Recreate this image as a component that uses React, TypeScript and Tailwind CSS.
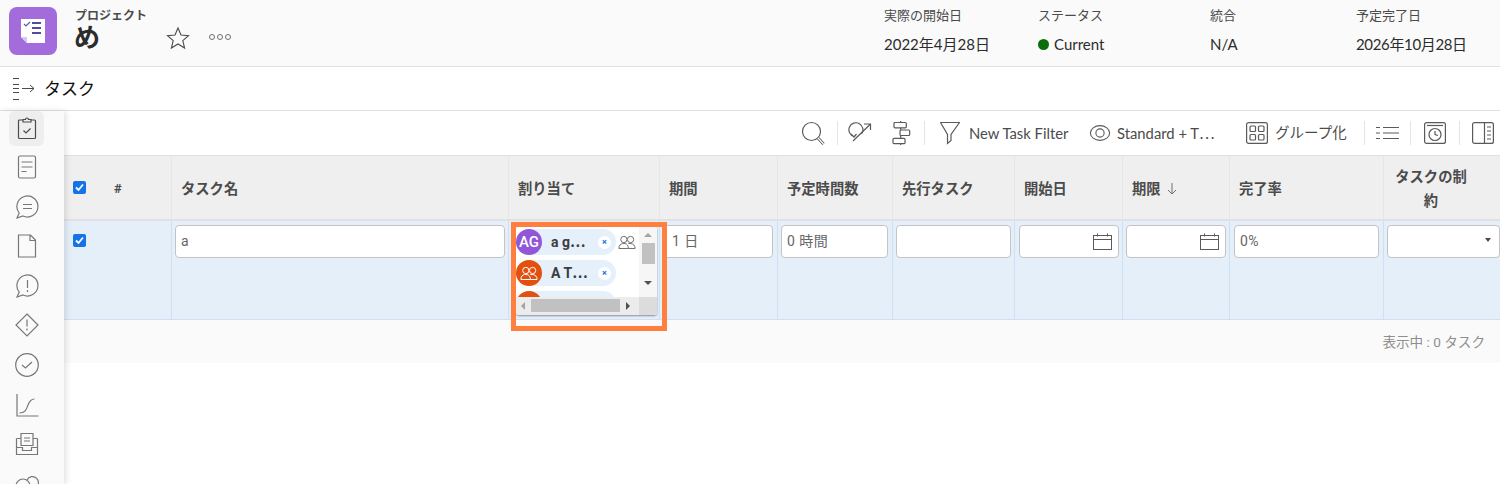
import React from 'react';

const FONT = "font-['Roboto','Noto_Sans_CJK_JP',sans-serif]";
const ADOBE = "font-['Lato','Noto_Sans_CJK_JP',sans-serif]";

const Ico: React.FC<{ w?: number; h?: number; box: string; className?: string; children: React.ReactNode }> = ({ w = 24, h = 24, box, className, children }) => (
  <svg width={w} height={h} viewBox={box} fill="none" stroke="currentColor" strokeWidth="1.2" className={className}>
    {children}
  </svg>
);

const Sep = () => <div className="w-px h-6 bg-[#e4e4e4]" />;

const MetaCol: React.FC<{ label: string; className: string; children: React.ReactNode }> = ({ label, className, children }) => (
  <div className={className}>
    <div className="text-[13px] leading-[18px] text-[#4b4b4b]">{label}</div>
    <div className="mt-[10px] text-[15px] leading-[20px] text-[#2c2c2c] flex items-center">{children}</div>
  </div>
);

const Header = () => (
  <header className={`h-[67px] bg-[#fafafa] border-b border-[#e1e1e1] flex items-start ${ADOBE}`}>
    <div className="ml-[9px] mt-[7px] w-12 h-12 rounded-lg bg-[#a36cdc] flex items-center justify-center">
      <svg width="26" height="26" viewBox="0 0 26 26">
        <path d="M1 1h24v24H7l-6-6z" fill="#fff" />
        <path d="M1 19h6v6z" fill="#d8c4ee" />
        <path d="M4 6l2 2 4-4" fill="none" stroke="#5c5ca8" strokeWidth="1.2" />
        <path d="M12 5h9M12 10h9M12 15h9" stroke="#4f4f9a" strokeWidth="2" />
      </svg>
    </div>
    <div className={`ml-[18px] mt-[9px] w-[92px] ${FONT}`}>
      <div className="text-[12px] leading-[15px] font-bold text-[#4b4b4b]">プロジェクト</div>
      <div className="-ml-px text-[26px] leading-[29px] font-bold text-[#2c2c2c]">め</div>
    </div>
    <svg width="24" height="24" viewBox="0 0 24 24" fill="none" stroke="#4b4b4b" strokeWidth="1.1" className="mt-[26px] -ml-px">
      <path d="M12 2l3 7 7.500 .7-5.700 4.900 1.800 7.400L12 18l-6.600 4 1.800-7.400L1.500 9.700 9 9z" />
    </svg>
    <div className="ml-[19px] mt-[34px] flex gap-[2px]">
      <span className="w-[6px] h-[6px] rounded-full border border-[#6e6e6e]" />
      <span className="w-[6px] h-[6px] rounded-full border border-[#6e6e6e]" />
      <span className="w-[6px] h-[6px] rounded-full border border-[#6e6e6e]" />
    </div>
    <div className="ml-auto flex pt-[6px]">
      <MetaCol label="実際の開始日" className="w-[154px]">2022年4月28日</MetaCol>
      <MetaCol label="ステータス" className="w-[172px]">
        <span className="w-[11px] h-[11px] rounded-full bg-[#0b6e0b] mr-[5px]" />
        Current
      </MetaCol>
      <MetaCol label="統合" className="w-[146px]">N/A</MetaCol>
      <MetaCol label="予定完了日" className="w-[144px]">
        <span className="tracking-[-0.35px]">2026年10月28日</span>
      </MetaCol>
    </div>
  </header>
);

const SubHeader = () => (
  <div className={`h-[44px] bg-white border-b border-[#e1e1e1] flex items-center pl-[13px] ${FONT}`}>
    <svg width="22" height="24" viewBox="0 0 22 24" fill="none" stroke="#4b4b4b" strokeWidth="1">
      <path d="M0 1.500h6M0 7.500h6M0 11.500h6M0 15.500h6M0 22.500h6" />
      <path d="M9 11.500h12M17 8l4 3.500-4 3.500" />
    </svg>
    <span className="ml-[9px] pt-[3px] text-[17px] text-[#111]">タスク</span>
  </div>
);

const Sidebar = () => {
  const c = 'text-[#777]';
  return (
    <aside className="w-16 shrink-0 bg-[#fafafa] shadow-[2px_0_6px_rgba(0,0,0,0.12)] z-10 flex flex-col items-start pl-[9px] overflow-hidden h-[374px]">
      <div className="w-[35px] h-[35px] rounded-md bg-[#eeeeee] flex items-center justify-center pb-[2px] shrink-0">
        <Ico box="0 0 20 24" w={20} h={24} className="text-[#4b4b4b]">
          <path d="M6 4H2.500A1 1 0 0 0 1.500 5v16.500a1 1 0 0 0 1 1h15a1 1 0 0 0 1-1V5a1 1 0 0 0-1-1H14M6 6V3.500h2.500a1.500 1.500 0 0 1 3 0H14V6z" />
          <path d="M6.500 14.500l2.500 2.500 4.500-4.500" />
        </Ico>
      </div>
      <div className={`w-[35px] flex flex-col items-center gap-[15.600px] mt-[9px] ${c}`}>
        <Ico box="0 0 20 24" w={20} h={24}>
          <rect x="1.500" y="1" width="17" height="22" rx="1.500" />
          <path d="M4.500 7h11M4.500 12h11M4.500 16.500h5" />
        </Ico>
        <Ico box="0 0 24 24">
          <path d="M2 23l2.200-5A10.500 10.500 0 1 1 8 21z" />
          <path d="M8 9.500h9M8 13.500h9" />
        </Ico>
        <Ico box="0 0 20 24" w={20} h={24}>
          <path d="M1.500 1h12l5 5v17h-17zM13 1v5.500h5.500" />
        </Ico>
        <Ico box="0 0 24 24">
          <path d="M2 23l2.200-5A10.500 10.500 0 1 1 8 21z" />
          <path d="M12.500 6v8M12.500 16v2" />
        </Ico>
        <Ico box="0 0 24 24">
          <path d="M12 1l11 11-11 11L1 12z" />
          <path d="M12 6.500v7M12 15.500v2" />
        </Ico>
        <Ico box="0 0 24 24">
          <circle cx="12" cy="12" r="11.300" />
          <path d="M7 12l3.500 3L17 9" />
        </Ico>
        <Ico box="0 0 24 24">
          <path d="M2 1v22h21.500" />
          <path d="M4.500 20c6 0 7-4 8.500-8s3-6 6.500-6" />
        </Ico>
        <Ico box="0 0 24 24">
          <path d="M1.500 6.500v16h21v-16M1.500 15.500h6v3h9v-3h6" />
          <path d="M6 6.500V1.500h12v12H6zM9 6h6M9 9h6" />
          <path d="M1.500 6.500H6M18 6.500h4.500" />
        </Ico>
        <Ico box="0 0 24 24">
          <circle cx="8" cy="14" r="7" />
          <path d="M12 8a6 6 0 1 1 8 8M5 13h6M5 16h6" />
        </Ico>
      </div>
    </aside>
  );
};

const ToolText: React.FC<{ children: React.ReactNode; className: string }> = ({ children, className }) => (
  <span className={`text-[#4b4b4b] whitespace-nowrap ${className}`}>{children}</span>
);

const Toolbar = () => (
  <div className={`h-[44px] flex items-center text-[#5a5a5a] pl-[737px] ${ADOBE}`}>
    <Ico box="0 0 24 24" className="shrink-0">
      <circle cx="10.500" cy="10.500" r="9" />
      <path d="M17 17l5.500 6" strokeWidth="3" />
      <path d="M17 17l5.500 6" strokeWidth="1.200" stroke="#fff" />
    </Ico>
    <div className="ml-[12px]"><Sep /></div>
    <Ico box="0 0 24 24" className="ml-[10px] shrink-0">
      <path d="M5 20L22.500 3M16 3h6.500v6" />
      <path d="M6 15.500A7 7 0 1 1 13.500 13M3 13l3 3 2.500-3" />
    </Ico>
    <Ico box="0 0 19 24" w={19} h={24} className="ml-[20px] shrink-0">
      <rect x="2" y="1.500" width="12.300" height="5.300" rx="1" />
      <rect x="8" y="9" width="9.700" height="5.500" rx="1" />
      <rect x="1" y="17.300" width="12" height="5.400" rx="1" />
      <path d="M8.700 0v1.500M8.700 6.800V9M8.700 14.500v2.800M8.700 22.700V24" />
    </Ico>
    <div className="ml-[13px]"><Sep /></div>
    <Ico box="0 0 20 24" w={20} h={24} className="ml-[15px] shrink-0">
      <path d="M.5 1.500h19L11 13.500v6l-3.500 3v-9z" />
    </Ico>
    <ToolText className="ml-[9px] w-[100px] text-[14.800px]">New Task Filter</ToolText>
    <Ico box="0 0 24 24" w={22} h={24} className="ml-[20px] shrink-0">
      <ellipse cx="12" cy="12" rx="10.500" ry="8" />
      <circle cx="12" cy="12" r="4.500" />
    </Ico>
    <ToolText className="ml-[6px] w-[118px] text-[14.800px]">Standard + T⋯</ToolText>
    <Ico box="0 0 22 22" w={22} h={22} className="ml-[11px] shrink-0">
      <rect x=".6" y=".6" width="20.800" height="20.800" rx="2" />
      <rect x="4" y="4" width="5.500" height="5.500" rx="1" />
      <rect x="12.500" y="4" width="5.500" height="5.500" rx="1" />
      <rect x="4" y="12.500" width="5.500" height="5.500" rx="1" />
      <rect x="12.500" y="12.500" width="5.500" height="5.500" rx="1" />
    </Ico>
    <ToolText className="ml-[7px] w-[72px] text-[14.500px]">グループ化</ToolText>
    <div className="ml-[17px]"><Sep /></div>
    <Ico box="0 0 24 24" className="ml-[11px] shrink-0">
      <path d="M0 6.500h4M7 6.500h16M0 12h4M7 12h16M0 17.500h4M7 17.500h16" />
    </Ico>
    <div className="ml-[10px]"><Sep /></div>
    <Ico box="0 0 22 22" w={22} h={22} className="ml-[13px] shrink-0">
      <rect x=".6" y=".6" width="20.800" height="20.800" rx="2" />
      <path d="M3 3.500h16" />
      <circle cx="11" cy="12.500" r="6" />
      <path d="M11 9v3.500l3 1" />
    </Ico>
    <div className="ml-[13px]"><Sep /></div>
    <Ico box="0 0 22 22" w={22} h={22} className="ml-[12px] shrink-0">
      <rect x=".6" y=".6" width="20.800" height="20.800" rx="2" />
      <path d="M12.500 .6v20.800M15 5h4M15 9h4M15 13h4M15 17h4" />
    </Ico>
  </div>
);

const GRID = 'grid grid-cols-[107px_337px_151px_118px_115px_122px_108px_107px_154px_140px]';

const Checkbox = () => (
  <span className="w-[13px] h-[13px] rounded-[2px] bg-[#1473e6] flex items-center justify-center">
    <svg width="9" height="9" viewBox="0 0 9 9" fill="none" stroke="#fff" strokeWidth="1.800">
      <path d="M1 4.500l2.500 2.500L8 1.500" />
    </svg>
  </span>
);

const headCols = ['タスク名', '割り当て', '期間', '予定時間数', '先行タスク', '開始日'];

const TableHead = () => (
  <div className={`${GRID} h-[66px] bg-[#efefef] border-t border-b-2 border-[#e1e1e1] text-[14.300px] font-bold text-[#4b4b4b] ${FONT}`}>
    <div className="flex items-center pl-[9px]">
      <Checkbox />
      <span className="ml-[28px] pt-[3px] text-[13px]">#</span>
    </div>
    {headCols.map((h) => (
      <div key={h} className="border-l border-[#e6e6e6] flex items-center pl-[9px] pt-[5px]">{h}</div>
    ))}
    <div className="border-l border-[#e6e6e6] flex items-center pl-[9px] pt-[5px]">
      期限
      <svg width="10" height="12" viewBox="0 0 10 12" fill="none" stroke="#6e6e6e" strokeWidth="1" className="ml-[6px] -mt-[2px]">
        <path d="M5 0v11M1 7l4 4 4-4" />
      </svg>
    </div>
    <div className="border-l border-[#e6e6e6] flex items-center pl-[9px] pt-[5px]">完了率</div>
    <div className="border-l border-[#e6e6e6] flex items-center pl-[10px] pt-[2px] w-[117px]">
      <span className="w-[74px] text-center leading-[24px]">タスクの制約</span>
    </div>
  </div>
);

const Field: React.FC<{ children?: React.ReactNode }> = ({ children }) => (
  <div className="h-[33px] bg-white border border-[#c4c4c4] rounded-[4px] flex items-center px-[5px] text-[14px] tracking-[0.5px] text-[#666]">
    {children}
  </div>
);

const Calendar = () => (
  <svg width="19" height="17" viewBox="0 0 19 17" fill="none" stroke="#5a5a5a" strokeWidth="1" className="ml-auto mr-[1px]">
    <rect x=".5" y="2.500" width="18" height="14" />
    <path d="M.5 6.500h18M4.500 .5v3M14.500 .5v3" />
  </svg>
);

const UsersIcon: React.FC<{ color: string; w: number }> = ({ color, w }) => (
  <svg width={w} height={w * 0.8} viewBox="0 0 20 16" fill="none" stroke={color} strokeWidth="1.100">
    <circle cx="6.500" cy="5" r="3.500" />
    <circle cx="14" cy="5" r="3.500" />
    <path d="M1 15c0-4 2-5 4-5.500h3c2 .5 3.500 2 3.500 5.500zM11.500 9.500h3c2.500 .5 4.500 2 4.500 5.500h-7.500" />
  </svg>
);

const Chip: React.FC<{ label: string; avatar: React.ReactNode; bg: string }> = ({ label, avatar, bg }) => (
  <div className="w-[100px] h-[26px] rounded-full bg-[#e5f0fb] flex items-center shrink-0">
    <span className={`w-[26px] h-[26px] rounded-full flex items-center justify-center text-white text-[15px] font-medium ${bg}`}>{avatar}</span>
    <span className="ml-[9px] w-[47px] text-[14px] font-bold text-[#3c3c3c] whitespace-nowrap">{label}</span>
    <span className="w-[13px] h-[13px] rounded-full bg-white flex items-center justify-center text-[9px] leading-none font-bold text-[#1473e6]">×</span>
  </div>
);

const Assignees = () => (
  <div className="relative h-[88px] bg-white rounded-[3px] shadow-[0_1px_2px_rgba(0,0,0,0.4)] overflow-hidden">
    <div className="flex flex-col gap-[5px] pt-[2px]">
      <div className="flex items-center gap-[2px]">
        <Chip label="a g⋯" avatar="AG" bg="bg-[#9256d9]" />
        <UsersIcon color="#6e6e6e" w={18} />
      </div>
      <Chip label="A T⋯" bg="bg-[#e34f0f]" avatar={<UsersIcon color="#fff" w={18} />} />
      <Chip label="" bg="bg-[#e34f0f]" avatar={null} />
    </div>
    {/* fake native scrollbars */}
    <div className="absolute right-0 top-0 bottom-0 w-[18px] bg-[#f6f6f6] flex flex-col items-center">
      <span className="mt-[6px] w-0 h-0 border-x-[4px] border-x-transparent border-b-[4px] border-b-[#a3a3a3]" />
      <span className="mt-[6px] w-[13px] h-[21px] bg-[#c1c1c1]" />
      <span className="mt-[17px] w-0 h-0 border-x-[4px] border-x-transparent border-t-[4px] border-t-[#505050]" />
    </div>
    <div className="absolute left-0 right-0 bottom-0 h-[18px] pb-px bg-[#ececec] flex items-center">
      <span className="ml-[5px] w-0 h-0 border-y-[4px] border-y-transparent border-r-[4px] border-r-[#a3a3a3]" />
      <span className="ml-[6px] w-[89px] h-[13px] bg-[#c1c1c1]" />
      <span className="ml-[6px] w-0 h-0 border-y-[4px] border-y-transparent border-l-[4px] border-l-[#505050]" />
      <span className="ml-auto w-[18px] h-[18px] -mb-px bg-[#dcdcdc]" />
    </div>
  </div>
);

const cell = 'border-l border-[#cfe0f5] pt-[4px]';

const TableRow = () => (
  <div className={`${GRID} h-[99px] bg-[#e5eff9] border-b border-[#cfe0f5] ${FONT}`}>
    <div className="pl-[9px] pt-[13px]"><Checkbox /></div>
    <div className={`${cell} pl-[3px] pr-[3px]`}><Field>a</Field></div>
    <div className={`${cell} pl-[7px] pr-[2px] pt-[6px]`}><Assignees /></div>
    <div className={`${cell} pl-[3px] pr-[4px]`}><Field><span className="ml-[3px]">1 日</span></Field></div>
    <div className={`${cell} pl-[3px] pr-[4px]`}><Field>0 時間</Field></div>
    <div className={`${cell} pl-[3px] pr-[3px]`}><Field /></div>
    <div className={`${cell} pl-[4px] pr-[3px]`}><Field><Calendar /></Field></div>
    <div className={`${cell} pl-[3px] pr-[3px]`}><Field><Calendar /></Field></div>
    <div className={`${cell} pl-[4px] pr-[4px]`}><Field>0%</Field></div>
    <div className={`${cell} pl-[3px] w-[117px]`}>
      <Field>
        <span className="ml-auto mr-[3px] -mt-[4px] w-0 h-0 border-x-[3px] border-x-transparent border-t-[4px] border-t-[#4b4b4b]" />
      </Field>
    </div>
  </div>
);

export default function App() {
  return (
    <div className="relative h-[484px] overflow-hidden bg-white">
      <Header />
      <SubHeader />
      <div className="flex">
        <Sidebar />
        <main className="flex-1 min-w-0">
          <Toolbar />
          <TableHead />
          <TableRow />
          <div className={`h-[43px] bg-[#fafafa] flex items-center justify-end pr-[15px] pt-[2px] text-[13.600px] text-[#8e8e8e] ${FONT}`}>
            表示中 : 0 タスク
          </div>
        </main>
      </div>
      {/* orange annotation box */}
      <div className="absolute left-[511px] top-[222px] w-[156px] h-[109px] border-[5px] border-[#ff7f3f] pointer-events-none" />
    </div>
  );
}
